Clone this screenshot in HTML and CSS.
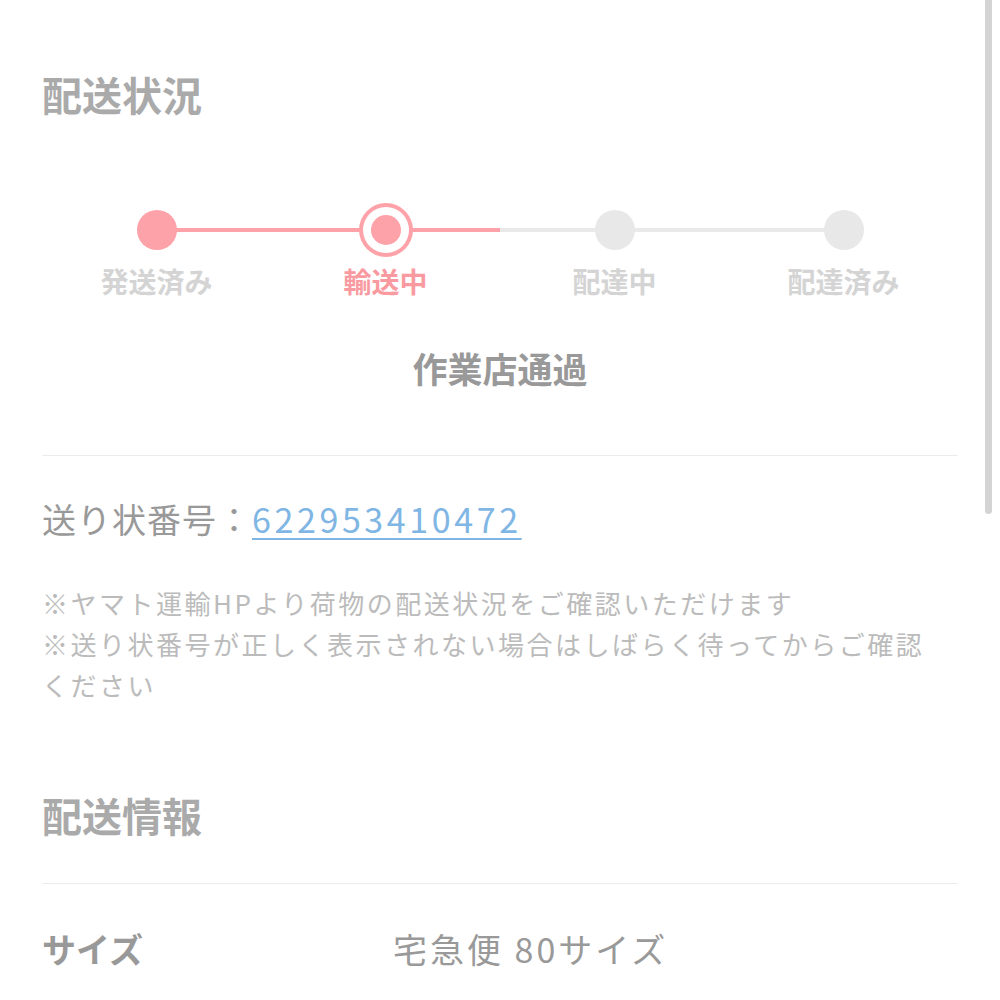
FILE: index.html
```html
<!DOCTYPE html>
<html lang="ja">
<head>
  <meta charset="UTF-8">
  <meta name="viewport" content="width=device-width, initial-scale=1.0">
  <title>配送状況</title>
  <link rel="stylesheet" href="styles.css">
</head>
<body>
  <div class="scrollbar"></div>
  <div class="page">
    <section class="status">
      <h2 class="title">配送状況</h2>
      <div class="steps">
        <div class="track"></div>
        <div class="step done">
          <div class="dot-area"><span class="dot"></span></div>
          <p class="step-label">発送済み</p>
        </div>
        <div class="step current">
          <div class="dot-area"><span class="dot"></span></div>
          <p class="step-label">輸送中</p>
        </div>
        <div class="step">
          <div class="dot-area"><span class="dot"></span></div>
          <p class="step-label">配達中</p>
        </div>
        <div class="step">
          <div class="dot-area"><span class="dot"></span></div>
          <p class="step-label">配達済み</p>
        </div>
      </div>
      <p class="sub-status">作業店通過</p>
    </section>

    <section class="tracking">
      <p class="slip">送り状番号：<a href="#" class="slip-no">622953410472</a></p>
      <p class="note">※ヤマト運輸HPより荷物の配送状況をご確認いただけます<br>※送り状番号が正しく表示されない場合はしばらく待ってからご確認ください</p>
    </section>

    <section class="info">
      <h2 class="title">配送情報</h2>
    </section>
    <div class="row">
      <div class="row-label">サイズ</div>
      <div class="row-value">宅急便 80サイズ</div>
    </div>
  </div>
</body>
</html>
```

FILE: styles.css
```css
body {
  margin: 0;
  padding: 0;
  background-color: #fff;
  font-family: 'Noto Sans CJK JP', 'Noto Sans', sans-serif;
  color: #999;
  overflow: hidden;
}

p {
  margin: 0;
}

.page {
  padding: 0 42px;
}

.scrollbar {
  position: fixed;
  top: 0;
  right: 8px;
  width: 7px;
  height: 514px;
  background-color: #d4d4d4;
  border-radius: 0 0 4px 4px;
}

.title {
  margin: 0;
  font-size: 40px;
  line-height: 48px;
  font-weight: bold;
  color: #aaa;
}

.status {
  padding-top: 70px;
  padding-bottom: 65px;
  border-bottom: 1px solid #ececec;
}

.steps {
  position: relative;
  display: flex;
  margin-top: 84px;
}

.track {
  position: absolute;
  top: 26px;
  left: 113px;
  right: 113px;
  height: 4px;
  background: linear-gradient(to right, #fda2a8 50%, #e9e9e9 50%);
}

.step {
  flex: 1;
  display: flex;
  flex-direction: column;
  align-items: center;
}

.dot-area {
  position: relative;
  height: 56px;
  display: flex;
  align-items: center;
  justify-content: center;
}

.dot {
  display: block;
  width: 40px;
  height: 40px;
  border-radius: 50%;
  background-color: #e8e8e8;
}

.step.done .dot {
  background-color: #fda2a8;
}

.step.current .dot {
  width: 30px;
  height: 30px;
  background-color: #fda2a8;
  box-shadow: 0 0 0 8px #fff, 0 0 0 12px #fda2a8;
}

.step-label {
  margin-top: 5px;
  font-size: 28px;
  line-height: 36px;
  font-weight: bold;
  color: #d4d4d4;
}

.step.current .step-label {
  color: #f99aa1;
}

.sub-status {
  margin-top: 47px;
  font-size: 35px;
  line-height: 44px;
  font-weight: bold;
  text-align: center;
  color: #999;
}

.tracking {
  padding-top: 41px;
}

.slip {
  font-size: 34px;
  line-height: 44px;
  letter-spacing: 1px;
  color: #999;
}

.slip-no {
  color: #7fb6e4;
  letter-spacing: 3.6px;
  text-decoration: underline;
  text-decoration-thickness: 2px;
  text-underline-offset: 5px;
}

.note {
  margin-top: 41px;
  padding-right: 26px;
  font-size: 26px;
  line-height: 41px;
  letter-spacing: 2.5px;
  color: #bbb;
}

.info {
  padding-top: 86px;
  padding-bottom: 44px;
  border-bottom: 1px solid #ececec;
}

.row {
  display: flex;
  align-items: center;
  padding-top: 43px;
}

.row-label {
  width: 351px;
  font-size: 34px;
  line-height: 44px;
  font-weight: bold;
  color: #999;
}

.row-value {
  font-size: 34px;
  line-height: 44px;
  letter-spacing: 3px;
  color: #999;
}
```
